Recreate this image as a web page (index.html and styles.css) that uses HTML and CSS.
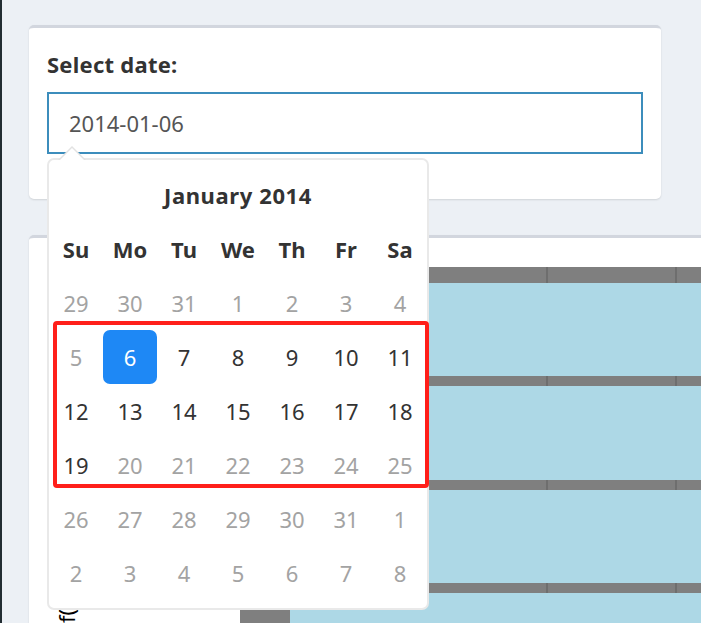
FILE: index.html
```html
<!DOCTYPE html>
<html>
<head>
<meta charset="utf-8">
<link rel="stylesheet" href="styles.css">
</head>
<body>
<div class="wrapper">
  <div class="box box-date">
    <label class="label">Select date:</label>
    <input class="date-input" type="text" value="2014-01-06">
  </div>
  <div class="box box-plot">
    <span class="axis-title">f(x)</span>
    <div class="plot">
      <div class="plot-side"></div>
      <div class="plot-main">
        <div class="strip strip-top"></div>
        <div class="panel"></div>
        <div class="strip strip-sep"></div>
        <div class="panel"></div>
        <div class="strip strip-sep"></div>
        <div class="panel"></div>
        <div class="strip strip-sep"></div>
        <div class="panel"></div>
      </div>
    </div>
  </div>
</div>

<div class="datepicker">
  <div class="dp-grid">
    <div class="dp-cell"></div>
    <div class="dp-title">January 2014</div>
    <div class="dp-cell"></div>
    <div class="dp-head">Su</div><div class="dp-head">Mo</div><div class="dp-head">Tu</div><div class="dp-head">We</div><div class="dp-head">Th</div><div class="dp-head">Fr</div><div class="dp-head">Sa</div>
    <div class="dp-cell muted">29</div><div class="dp-cell muted">30</div><div class="dp-cell muted">31</div><div class="dp-cell muted">1</div><div class="dp-cell muted">2</div><div class="dp-cell muted">3</div><div class="dp-cell muted">4</div>
    <div class="dp-cell muted">5</div><div class="dp-cell active">6</div><div class="dp-cell">7</div><div class="dp-cell">8</div><div class="dp-cell">9</div><div class="dp-cell">10</div><div class="dp-cell">11</div>
    <div class="dp-cell">12</div><div class="dp-cell">13</div><div class="dp-cell">14</div><div class="dp-cell">15</div><div class="dp-cell">16</div><div class="dp-cell">17</div><div class="dp-cell">18</div>
    <div class="dp-cell">19</div><div class="dp-cell muted">20</div><div class="dp-cell muted">21</div><div class="dp-cell muted">22</div><div class="dp-cell muted">23</div><div class="dp-cell muted">24</div><div class="dp-cell muted">25</div>
    <div class="dp-cell muted">26</div><div class="dp-cell muted">27</div><div class="dp-cell muted">28</div><div class="dp-cell muted">29</div><div class="dp-cell muted">30</div><div class="dp-cell muted">31</div><div class="dp-cell muted">1</div>
    <div class="dp-cell muted">2</div><div class="dp-cell muted">3</div><div class="dp-cell muted">4</div><div class="dp-cell muted">5</div><div class="dp-cell muted">6</div><div class="dp-cell muted">7</div><div class="dp-cell muted">8</div>
  </div>
</div>

<div class="highlight"></div>
</body>
</html>
```

FILE: styles.css
```css
html, body {
  margin: 0;
  padding: 0;
  overflow: hidden;
  height: 623px;
}

body {
  background: #ecf0f5;
  font-family: "Noto Sans", "Open Sans", sans-serif;
  color: #333;
}

.wrapper {
  border-left: 2px solid #222d32;
  height: 623px;
  overflow: hidden;
  box-sizing: border-box;
  padding: 25px 0 0 27px;
}

.box {
  background: #fff;
  border-top: 3px solid #d2d6de;
  border-radius: 5px;
  box-shadow: 0 1px 2px rgba(0, 0, 0, 0.12);
  box-sizing: border-box;
}

.box-date {
  width: 632px;
  height: 174px;
  padding: 21px 18px 0;
}

.label {
  display: block;
  font-weight: 700;
  font-size: 22px;
  line-height: 31px;
  letter-spacing: 0.25px;
  color: #333;
  margin-bottom: 12px;
}

.date-input {
  display: block;
  width: 100%;
  height: 62px;
  box-sizing: border-box;
  border: 2px solid #3c8dbc;
  border-radius: 0;
  padding: 0 20px;
  margin: 0;
  font-family: "Noto Sans", "Open Sans", sans-serif;
  font-size: 22px;
  color: #555;
  background: #fff;
  outline: none;
}

.box-plot {
  position: relative;
  margin-top: 36px;
  width: 700px;
  height: 420px;
  border-radius: 5px 0 0 0;
}

.axis-title {
  position: absolute;
  left: 26px;
  top: 385px;
  transform-origin: 0 0;
  transform: rotate(-90deg);
  font-size: 22px;
  line-height: 22px;
  color: #000;
  white-space: nowrap;
}

.plot {
  display: flex;
  margin: 29px 0 0 211px;
  height: 420px;
}

.plot-side {
  width: 50px;
  background: #7f7f7f;
}

.plot-main {
  flex: 1;
  display: flex;
  flex-direction: column;
}

.strip {
  background: repeating-linear-gradient(90deg, #6e6e6e 0 2px, #7f7f7f 2px 129px);
  background-position: -2px 0;
}

.strip-top {
  height: 16px;
}

.strip-sep {
  height: 10px;
}

.panel {
  height: 95px;
  background: #add8e6;
}

/* datepicker dropdown */
.datepicker {
  position: absolute;
  left: 47px;
  top: 158px;
  width: 382px;
  height: 452px;
  box-sizing: border-box;
  border: 2px solid #e9e9e9;
  border-radius: 7px;
  background: #fff;
  padding: 8px 0;
  z-index: 10;
}

.datepicker::before {
  content: "";
  position: absolute;
  top: -14px;
  left: 9px;
  border-left: 14px solid transparent;
  border-right: 14px solid transparent;
  border-bottom: 14px solid #e2e2e2;
}

.datepicker::after {
  content: "";
  position: absolute;
  top: -12px;
  left: 11px;
  border-left: 12px solid transparent;
  border-right: 12px solid transparent;
  border-bottom: 12px solid #fff;
}

.dp-grid {
  display: grid;
  grid-template-columns: repeat(7, 54px);
  grid-auto-rows: 54px;
  font-size: 22px;
}

.dp-title {
  grid-column: span 5;
  text-align: center;
  line-height: 54px;
  font-weight: 700;
  letter-spacing: 0.6px;
  color: #333;
}

.dp-head {
  text-align: center;
  line-height: 54px;
  font-weight: 700;
  color: #333;
}

.dp-cell {
  text-align: center;
  line-height: 54px;
  color: #333;
}

.dp-cell.muted {
  color: #a3a3a3;
}

.dp-cell.active {
  background: #1e88f5;
  color: #fff;
  border-radius: 7px;
}

.highlight {
  position: absolute;
  left: 53px;
  top: 321px;
  width: 376px;
  height: 167px;
  box-sizing: border-box;
  border: 4px solid #ff1f1a;
  border-radius: 4px;
  z-index: 20;
}
```
